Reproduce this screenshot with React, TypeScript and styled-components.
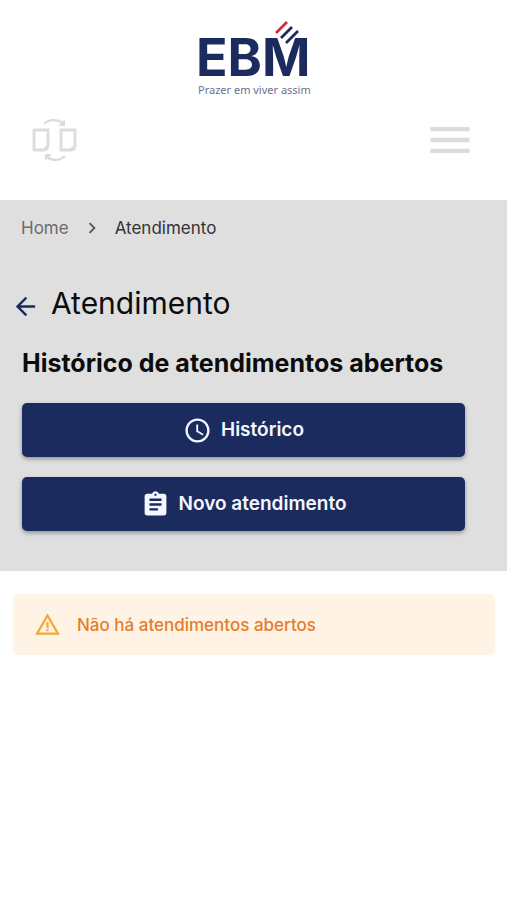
import React from "react";
import styled, { createGlobalStyle } from "styled-components";
import {
  MdAccessTime,
  MdArrowBack,
  MdAssignment,
  MdMenu,
  MdNavigateNext,
  MdWarningAmber,
} from "react-icons/md";

const navy = "#1c2b5e";

const GlobalStyle = createGlobalStyle`
  * { box-sizing: border-box; }
  body {
    margin: 0;
    background: #fff;
    color: #0c0c0c;
    font-family: Inter, "Open Sans", sans-serif;
  }
`;

const Header = styled.header`
  display: flex;
  flex-direction: column;
  gap: 16px;
  padding: 20px 32px 34px;
`;

const LogoLink = styled.a`
  display: block;
  align-self: center;
  height: 78px;

  svg {
    overflow: visible;
  }
`;

const Toolbar = styled.div`
  display: flex;
  align-items: center;
  justify-content: space-between;
  height: 52px;
`;

const IconButton = styled.button`
  display: flex;
  padding: 0;
  border: 0;
  background: none;
  color: #dcdcdc;
  cursor: pointer;
`;

const MenuButton = styled(IconButton)`
  margin-right: -1px;
`;

const Banner = styled.section`
  display: flex;
  flex-direction: column;
  padding: 16px 42px 40px 22px;
  background: #dfdfdf;
`;

const Breadcrumbs = styled.nav`
  display: flex;
  align-items: center;
  gap: 12px;
  height: 24px;
  margin-left: -1px;
  font-size: 17px;
  line-height: 24px;
  color: #333;

  svg {
    color: #555;
  }
`;

const Crumb = styled.a`
  color: #6c6c6c;
  text-decoration: none;
`;

const TitleRow = styled.div`
  display: flex;
  align-items: center;
  gap: 11px;
  height: 40px;
  margin: 43px 0 0 -11px;
`;

const BackLink = styled.a`
  display: flex;
  padding-top: 6px;
  color: ${navy};
`;

const Title = styled.h1`
  margin: 0;
  font-size: 30px;
  font-weight: 400;
  line-height: 40px;
`;

const Subtitle = styled.h2`
  margin: 23px 0 0;
  font-size: 25px;
  font-weight: 700;
  line-height: 34px;
`;

const Actions = styled.div`
  display: flex;
  flex-direction: column;
  gap: 20px;
  margin-top: 23px;
`;

const ActionButton = styled.button`
  display: flex;
  align-items: center;
  justify-content: center;
  gap: 9px;
  height: 54px;
  padding: 0 16px;
  border: 0;
  border-radius: 5px;
  background: ${navy};
  box-shadow: 0 2px 4px rgba(0, 0, 0, 0.35);
  color: #f4f7ff;
  font: 600 19px/26px Inter, sans-serif;
  cursor: pointer;
`;

const Alert = styled.div`
  display: flex;
  align-items: center;
  gap: 16px;
  min-height: 61px;
  margin: 23px 12px 0 13px;
  padding: 8px 21px;
  border-radius: 5px;
  background: #fff3e5;
  color: #e67c2c;
  font-size: 17px;
  font-weight: 500;
  line-height: 24px;

  svg {
    flex: none;
    color: #f5a733;
  }
`;

function Logo() {
  return (
    <svg width="112" height="78" viewBox="0 0 112 78" role="img" aria-label="EBM Prazer em viver assim">
      <text x="-2" y="56" fill={navy} fontFamily="Inter, sans-serif" fontSize="52" fontWeight="700">
        EBM
      </text>
      <g fill="none" strokeWidth="2.8">
        <path d="M82 19 94 7M87 24 100 11" stroke="#fff" strokeWidth="6" />
        <path d="M78 13 89 2" stroke="#d32b40" />
        <path d="M83 18 94 7M88 23 100 11" stroke={navy} />
      </g>
      <text x="0" y="74" fill="#69728f" fontFamily="Noto Sans, sans-serif" fontSize="11">
        Prazer em viver assim
      </text>
    </svg>
  );
}

function SwapPagesIcon() {
  return (
    <svg width="46" height="46" viewBox="0 0 46 46" fill="none" stroke="currentColor" strokeWidth="2.8" aria-hidden="true">
      <path d="M2 13H16V29L12 33H2ZM29 13H43V29L39 33H29Z" />
      <path d="M16 28 11 33H16ZM43 28 38 33H43Z" fill="currentColor" strokeWidth="1" />
      <path d="M12 7C17 2 25 2 31 6M33 39C28 44 20 44 15 40" strokeWidth="2.4" />
      <path d="M33 2V9H26ZM13 44V37H20Z" fill="currentColor" stroke="none" />
    </svg>
  );
}

export default function App() {
  return (
    <>
      <GlobalStyle />
      <Header>
        <LogoLink href="#">
          <Logo />
        </LogoLink>
        <Toolbar>
          <IconButton type="button" aria-label="Trocar unidade">
            <SwapPagesIcon />
          </IconButton>
          <MenuButton type="button" aria-label="Abrir menu">
            <MdMenu size={52} />
          </MenuButton>
        </Toolbar>
      </Header>
      <main>
        <Banner>
          <Breadcrumbs aria-label="Navegação">
            <Crumb href="#">Home</Crumb>
            <MdNavigateNext size={22} aria-hidden="true" />
            <span aria-current="page">Atendimento</span>
          </Breadcrumbs>
          <TitleRow>
            <BackLink href="#" aria-label="Voltar">
              <MdArrowBack size={29} />
            </BackLink>
            <Title>Atendimento</Title>
          </TitleRow>
          <Subtitle>Histórico de atendimentos abertos</Subtitle>
          <Actions>
            <ActionButton type="button">
              <MdAccessTime size={29} aria-hidden="true" />
              Histórico
            </ActionButton>
            <ActionButton type="button">
              <MdAssignment size={29} aria-hidden="true" />
              Novo atendimento
            </ActionButton>
          </Actions>
        </Banner>
        <Alert role="status">
          <MdWarningAmber size={27} aria-hidden="true" />
          Não há atendimentos abertos
        </Alert>
      </main>
    </>
  );
}
